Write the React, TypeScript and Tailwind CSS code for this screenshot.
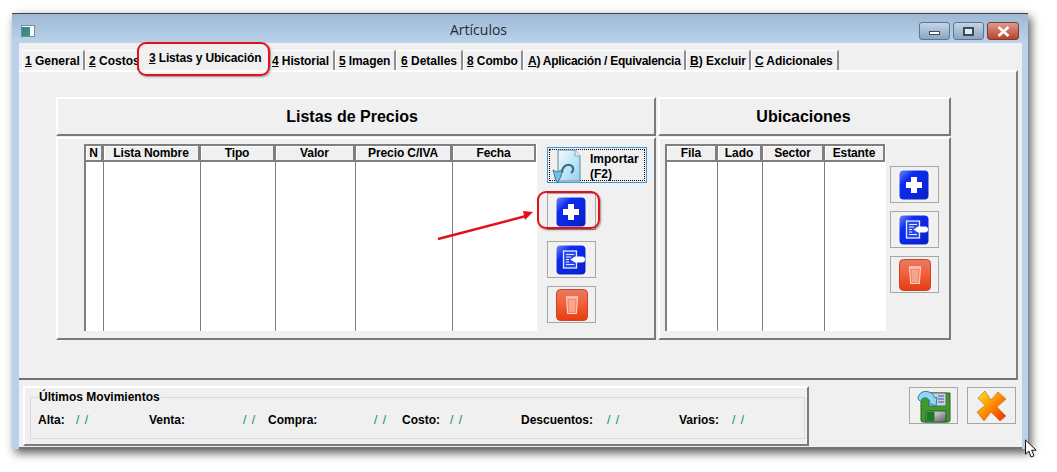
const tabs = [
  { key: "1", label: " General", cls: "w-[63px] pl-[2px]" },
  { key: "2", label: " Costos", cls: "w-[54px] pl-[3px]" },
  { key: "3", label: " Listas y Ubicación", cls: "w-[132px] pl-[10px] tracking-[-0.15px]", active: true },
  { key: "4", label: " Historial", cls: "w-[64px] pl-[0px] tracking-[-0.1px]" },
  { key: "5", label: " Imagen", cls: "w-[61px] pl-[3px] tracking-[-0.1px]" },
  { key: "6", label: " Detalles", cls: "w-[67px] pl-[4px]" },
  { key: "8", label: " Combo", cls: "w-[60px] pl-[3px] tracking-[-0.1px]" },
  { key: "A", label: ") Aplicación / Equivalencia", cls: "w-[163px] pl-[4px] tracking-[-0.25px]" },
  { key: "B", label: ") Excluir", cls: "w-[65px] pl-[3px]" },
  { key: "C", label: " Adicionales", cls: "w-[88px] pl-[3px] tracking-[-0.1px]" },
];

const priceCols = [
  { name: "N", cls: "w-[19px]" },
  { name: "Lista Nombre", cls: "w-[97px]" },
  { name: "Tipo", cls: "w-[75px]" },
  { name: "Valor", cls: "w-[80px]" },
  { name: "Precio C/IVA", cls: "w-[97px]" },
  { name: "Fecha", cls: "w-[84px]" },
];

const placeCols = [
  { name: "Fila", cls: "w-[52px]" },
  { name: "Lado", cls: "w-[45px]" },
  { name: "Sector", cls: "w-[62px]" },
  { name: "Estante", cls: "w-[61px]" },
];

const moves = [
  { label: "Alta:", labelCls: "w-[38px]", dateCls: "w-[73px]" },
  { label: "Venta:", labelCls: "w-[94px]", dateCls: "w-[25px]" },
  { label: "Compra:", labelCls: "w-[106px]", dateCls: "w-[28px]" },
  { label: "Costo:", labelCls: "w-[48px]", dateCls: "w-[71px]" },
  { label: "Descuentos:", labelCls: "w-[86px]", dateCls: "w-[72px]" },
  { label: "Varios:", labelCls: "w-[53px]", dateCls: "w-[20px]" },
];

function DataTable({ cols, width }: { cols: { name: string; cls: string }[]; width: string }) {
  return (
    <div className={`h-[187px] bg-white flex flex-col ${width}`}>
      <div className="flex h-[18px] shrink-0">
        {cols.map((c) => (
          <div
            key={c.name}
            className={`${c.cls} h-[18px] flex items-center justify-center text-[12px] tracking-[-0.1px] font-bold text-black bg-[#f0f0f0] border-y-2 border-r-2 border-l first:border-l-2 border-[#7f7f7f] shadow-[inset_1px_1px_0_#ffffff]`}
          >
            {c.name}
          </div>
        ))}
      </div>
      <div className="flex flex-1">
        {cols.map((c) => (
          <div key={c.name} className={`${c.cls} border-l first:border-l-2 border-[#7f7f7f]`} />
        ))}
      </div>
    </div>
  );
}

function PlusIcon() {
  return (
    <svg width="30" height="30" viewBox="0 0 30 30" className="drop-shadow-[0_0_2px_rgba(255,255,255,0.9)]">
      <defs>
        <linearGradient id="blueA" x1="0" y1="0" x2="1" y2="1">
          <stop offset="0" stopColor="#6f86f0" />
          <stop offset="0.28" stopColor="#0c2df0" />
          <stop offset="1" stopColor="#0a1fc8" />
        </linearGradient>
      </defs>
      <rect x="0.5" y="0.5" width="29" height="29" rx="4" fill="url(#blueA)" />
      <path d="M12 7h6v5h5v6h-5v5h-6v-5H7v-6h5z" fill="#fff" />
    </svg>
  );
}

function EditIcon() {
  return (
    <svg width="30" height="30" viewBox="0 0 30 30" className="drop-shadow-[0_0_2px_rgba(255,255,255,0.9)]">
      <defs>
        <linearGradient id="blueB" x1="0" y1="0" x2="1" y2="1">
          <stop offset="0" stopColor="#6f86f0" />
          <stop offset="0.28" stopColor="#0c2df0" />
          <stop offset="1" stopColor="#0a1fc8" />
        </linearGradient>
      </defs>
      <rect x="0.5" y="0.5" width="29" height="29" rx="4" fill="url(#blueB)" />
      <rect x="7.5" y="6" width="13" height="17" fill="#2a47ee" stroke="#e6ebff" strokeWidth="1.3" />
      <path d="M10 9.500h8M10 12h5M10 14.500h3M10 17h3M10 19.500h8" stroke="#e6ebff" strokeWidth="1.1" />
      <path d="M14.500 14.500l4.500-3h7a2.800 2.800 0 0 1 0 6h-7z" fill="#fff" />
    </svg>
  );
}

function TrashIcon() {
  return (
    <svg width="32" height="32" viewBox="0 0 32 32">
      <defs>
        <linearGradient id="redA" x1="0" y1="0" x2="0" y2="1">
          <stop offset="0" stopColor="#e87a62" />
          <stop offset="0.45" stopColor="#f2603a" />
          <stop offset="1" stopColor="#e63c0e" />
        </linearGradient>
      </defs>
      <rect x="0.5" y="0.5" width="31" height="31" rx="4" fill="url(#redA)" stroke="#c9452a" />
      <path d="M10 8h12" stroke="#f9c8b8" strokeWidth="1.6" />
      <path d="M10.500 9l1.200 15.500h8.600L21.500 9z" fill="#f6a48c" fillOpacity="0.6" stroke="#fbd2c4" strokeWidth="1.1" />
      <path d="M14 11v12M16 11v12M18 11v12" stroke="#fbd2c4" strokeWidth="0.8" />
    </svg>
  );
}

function ImportIcon() {
  return (
    <svg width="30" height="34" viewBox="0 0 30 34">
      <defs>
        <linearGradient id="pageA" x1="0" y1="0" x2="1" y2="1">
          <stop offset="0" stopColor="#f3fbff" />
          <stop offset="1" stopColor="#8fd4f2" />
        </linearGradient>
      </defs>
      <path d="M6 1h17l5 6v25H6z" fill="url(#pageA)" stroke="#6f8390" />
      <path d="M23 1v6h5" fill="#dff3fb" stroke="#8fa3ae" />
      <path d="M10 24c0-6 4-9 8-8 4 1 4 6 1 8" fill="none" stroke="#4b6c7d" strokeWidth="2.2" />
      <path d="M1 21l4 2 5-2-1 6-3 6-2-1z" fill="#6cc4ec" stroke="#44748c" />
    </svg>
  );
}

function SaveIcon() {
  return (
    <svg width="34" height="34" viewBox="0 0 34 34">
      <defs>
        <linearGradient id="diskA" x1="0" y1="0" x2="1" y2="1">
          <stop offset="0" stopColor="#f8f8f8" />
          <stop offset="1" stopColor="#5e5e5e" />
        </linearGradient>
      </defs>
      <path d="M4 4h29v27a2 2 0 0 1-2 2H6a2 2 0 0 1-2-2z" fill="#3f9a2c" stroke="#2c5e24" />
      <rect x="12" y="4" width="17" height="13" fill="#cdd3e0" stroke="#4f6a52" />
      <path d="M21 7h6M21 10h6M21 13h6" stroke="#3a55b0" strokeWidth="1.2" />
      <rect x="9" y="22" width="20" height="11" fill="url(#diskA)" stroke="#2c5e24" />
      <rect x="9.5" y="22.5" width="8" height="10" fill="#1d7a2a" />
      <path d="M1 10c0-6 6-9 11-7 3 1 5 3 6 6l2-1-1 9-8-3 2-1c-1-3-3-5-6-4-2 0-3 2-3 4z" fill="#8fd6f2" stroke="#2f7ea3" />
    </svg>
  );
}

function CancelIcon() {
  return (
    <svg width="32" height="32" viewBox="0 0 32 32">
      <defs>
        <linearGradient id="xA" x1="0" y1="0" x2="1" y2="1">
          <stop offset="0" stopColor="#ffe91a" />
          <stop offset="0.5" stopColor="#ff8a00" />
          <stop offset="1" stopColor="#f52a00" />
        </linearGradient>
      </defs>
      <path
        d="M9 1L15 10L22 2L30 9L21 17L30 26L24 31L15 22L8 31L1 22L9 15.500L2 8Z"
        fill="url(#xA)"
        stroke="#b97a3a"
        strokeWidth="0.7"
      />
    </svg>
  );
}

function IconButton({ children, className }: { children: React.ReactNode; className?: string }) {
  return (
    <div className={`w-[49px] h-[37px] shrink-0 border border-[#a6a6a6] bg-[#f0f0f0] flex items-center justify-center ${className ?? ""}`}>
      {children}
    </div>
  );
}

function PanelHeader({ title, className }: { title: string; className: string }) {
  return (
    <div className={`${className} h-[39px] flex items-center justify-center text-[16px] font-bold text-black border-t-2 border-l-2 border-white border-b-2 border-r-2 border-b-[#7a7a7a] border-r-[#7a7a7a]`}>
      {title}
    </div>
  );
}

export default function App() {
  return (
    <div className="relative w-[1057px] h-[472px] overflow-hidden bg-white pl-[12px] pt-[13px] font-['Liberation_Sans',Arial,sans-serif]">
      <div className="w-[1016px] h-[436px] flex flex-col border-t border-[#3c4650] bg-[#b9d1ea] shadow-[3px_4px_9px_rgba(0,0,0,0.65)]">
        {/* title bar */}
        <div className="h-[29px] shrink-0 flex items-center bg-gradient-to-b from-[#9fb9d5] to-[#bad3eb]">
          <div className="ml-[9px] w-[14px] h-[12px] bg-white border border-[#7b8a96] flex items-end shrink-0 mt-[4px]">
            <div className="w-[8px] h-[9px] bg-gradient-to-br from-[#2f7f9a] to-[#3f9a6a]" />
          </div>
          <span className="ml-[415px] mt-[2px] w-[60px] text-[14px] text-[#1f2a36] font-['Open_Sans',sans-serif]">Artículos</span>
          <div className="ml-[409px] flex gap-[3px] items-center mt-[5px]">
            <div className="w-[31px] h-[18px] rounded-[3px] border border-[#5c7590] bg-gradient-to-b from-[#c4d5e6] to-[#8ba6c2] flex items-center justify-center">
              <div className="w-[11px] h-[4px] mt-[3px] bg-white border border-[#3d4c5c]" />
            </div>
            <div className="w-[31px] h-[18px] rounded-[3px] border border-[#5c7590] bg-gradient-to-b from-[#c4d5e6] to-[#8ba6c2] flex items-center justify-center">
              <div className="w-[11px] h-[9px] bg-white/70 border-2 border-[#3d4c5c]" />
            </div>
            <div className="w-[32px] h-[18px] rounded-[3px] border border-[#7d3a34] bg-gradient-to-b from-[#dc9a8e] to-[#b8402a] flex items-center justify-center">
              <svg width="13" height="11" viewBox="0 0 13 11">
                <path d="M1.500 1l10 9M11.500 1l-10 9" stroke="#fff" strokeWidth="2.6" />
              </svg>
            </div>
          </div>
        </div>

        {/* client area */}
        <div className="ml-[7px] mr-[6px] flex-1 bg-[#f0f0f0] flex flex-col min-h-0">
          <div className="flex items-end h-[27px] pl-[3px] shrink-0">
            {tabs.map((t) => (
              <div
                key={t.key}
                className={
                  t.active
                    ? `${t.cls} h-[26px] relative z-10 pt-[5px] bg-[#f0f0f0] text-[12px] font-bold whitespace-nowrap`
                    : `${t.cls} h-[20px] pt-[1px] border-t border-l border-white border-r-2 border-r-[#8f8f8f] text-[12px] font-bold whitespace-nowrap`
                }
              >
                <span className="underline">{t.key}</span>
                {t.label}
              </div>
            ))}
          </div>

          {/* tab page */}
          <div className="h-[310px] mr-[4px] shrink-0 border-t-2 border-white border-r-2 border-r-[#808080] border-b-2 border-b-[#737373] pt-[25px] pl-[37px]">
            <div className="flex gap-[2px]">
              <div className="flex flex-col gap-[1px]">
                <PanelHeader title="Listas de Precios" className="w-[600px] pr-[8px]" />
                <div className="w-[600px] h-[203px] border-t-2 border-l-2 border-white border-b-2 border-r-2 border-b-[#7a7a7a] border-r-[#7a7a7a] pt-[5px] pl-[26px] flex">
                  <DataTable cols={priceCols} width="w-[453px]" />
                  <div className="ml-[10px] pt-[3px] flex flex-col">
                    <div className="w-[100px] h-[36px] border border-[#3b94dc] p-[1px]">
                      <div className="w-full h-full border border-dotted border-black flex text-[12px] font-bold">
                        <div className="ml-[2px] -mt-[1px]"><ImportIcon /></div>
                        <div className="ml-[8px] leading-[15px] pt-[2px]">
                          <div>Importar</div>
                          <div>(F2)</div>
                        </div>
                      </div>
                    </div>
                    <IconButton className="mt-[10px] pr-[1px]"><PlusIcon /></IconButton>
                    <IconButton className="mt-[11px] pr-[1px]"><EditIcon /></IconButton>
                    <IconButton className="mt-[8px]"><TrashIcon /></IconButton>
                  </div>
                </div>
              </div>

              <div className="flex flex-col gap-[1px]">
                <PanelHeader title="Ubicaciones" className="w-[293px] pr-[2px]" />
                <div className="w-[293px] h-[203px] border-t-2 border-l-2 border-white border-b-2 border-r-2 border-b-[#7a7a7a] border-r-[#7a7a7a] pt-[5px] pl-[5px] flex">
                  <DataTable cols={placeCols} width="w-[221px]" />
                  <div className="ml-[4px] pt-[22px] flex flex-col gap-[8px]">
                    <IconButton className="pr-[1px]"><PlusIcon /></IconButton>
                    <IconButton className="pr-[1px]"><EditIcon /></IconButton>
                    <IconButton><TrashIcon /></IconButton>
                  </div>
                </div>
              </div>
            </div>
          </div>

          {/* bottom strip */}
          <div className="flex flex-1 items-start pl-[4px] pt-[6px] border-b-2 border-[#737373]">
            <div className="w-[786px] h-[60px] border-t-2 border-l-2 border-white border-r-2 border-b-2 border-r-[#7a7a7a] border-b-[#7a7a7a] pl-[5px]">
              <fieldset className="w-[775px] h-[48px] mt-[3px] border border-[#d9d9d9] pl-[7px]">
                <legend className="px-[1px] text-[12px] font-bold leading-[13px]">Últimos Movimientos</legend>
                <div className="flex items-center h-[14px] mt-[9px] text-[12px] font-bold whitespace-nowrap">
                  {moves.map((m) => (
                    <div key={m.label} className="flex">
                      <span className={m.labelCls}>{m.label}</span>
                      <span className={`${m.dateCls} font-normal tracking-[1px] text-[#0b8a72]`}>/ /</span>
                    </div>
                  ))}
                </div>
              </fieldset>
            </div>
            <IconButton className="ml-[100px] mt-[1px]"><SaveIcon /></IconButton>
            <IconButton className="ml-[9px] mt-[1px]"><CancelIcon /></IconButton>
          </div>
        </div>
      </div>

      {/* red annotations over the screenshot */}
      <div className="absolute left-[137px] top-[42px] w-[133px] h-[34px] rounded-[9px] border-2 border-[#e2101a] shadow-[1px_1px_2px_rgba(0,0,0,0.4)] z-20" />
      <div className="absolute left-[537px] top-[191px] w-[63px] h-[38px] rounded-[9px] border-2 border-[#e2101a] shadow-[1px_1px_2px_rgba(0,0,0,0.4)] z-20" />
      <svg className="absolute left-[430px] top-[200px] z-20" width="110" height="50" viewBox="0 0 110 50">
        <path d="M8 39L96 16" stroke="#e2101a" strokeWidth="2.4" />
        <path d="M103 12l-10-1 2 9z" fill="#e2101a" />
      </svg>
      {/* mouse pointer */}
      <svg className="absolute left-[1024px] top-[439px] z-20" width="14" height="20" viewBox="0 0 14 20">
        <path d="M1.500 1v14l3.300-3 2.200 6 3-1.200-2.300-5.600h4.500z" fill="#fff" stroke="#111" strokeWidth="1" />
      </svg>
    </div>
  );
}
